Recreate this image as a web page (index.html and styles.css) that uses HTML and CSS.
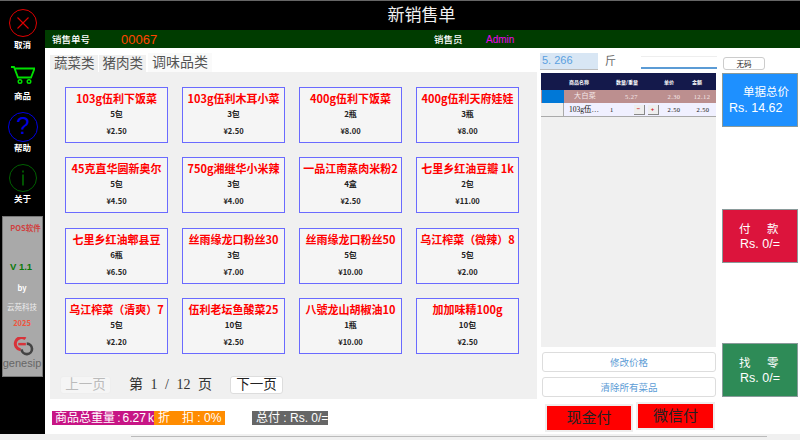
FILE: index.html
```html
<!DOCTYPE html>
<html lang="zh">
<head>
<meta charset="utf-8">
<title>新销售单</title>
<link rel="stylesheet" href="styles.css">
</head>
<body>
<div class="app">
  <aside class="side">
    <div class="nav nav-x">
      <svg viewBox="0 0 28 28" width="28" height="28"><circle cx="14" cy="14" r="13.500" fill="none" stroke="#e00000" stroke-width="1"/><path d="M8.500 8.500 19.500 19.500M19.500 8.500 8.500 19.500" stroke="#e00000" stroke-width="1.100"/></svg>
      <span>取消</span>
    </div>
    <div class="nav nav-cart">
      <svg viewBox="0 0 24 18" width="24" height="18"><path d="M0 1H3L7 11.500H20L23.500 2.500H4" fill="none" stroke="#00e000" stroke-width="1.800"/><circle cx="9" cy="15.500" r="1.800" fill="none" stroke="#00e000" stroke-width="1.400"/><circle cx="18" cy="15.500" r="1.800" fill="none" stroke="#00e000" stroke-width="1.400"/></svg>
      <span>商品</span>
    </div>
    <div class="nav nav-help">
      <svg viewBox="0 0 30 30" width="30" height="30"><circle cx="15" cy="15" r="14.500" fill="none" stroke="#0000e0" stroke-width="1"/><text x="15" y="22" text-anchor="middle" class="q">?</text></svg>
      <span>帮助</span>
    </div>
    <div class="nav nav-info">
      <svg viewBox="0 0 30 28" width="30" height="28"><circle cx="15" cy="14" r="13.500" fill="none" stroke="#006000" stroke-width="1"/><path d="M15 6.500v2M15 10.500v11" stroke="#008000" stroke-width="1.300"/></svg>
      <span>关于</span>
    </div>
    <div class="brand">
      <div class="b-pos">POS软件</div>
      <div class="b-ver">V 1.1</div>
      <div class="b-by">by</div>
      <div class="b-co">云苑科技</div>
      <div class="b-year">2025</div>
      <svg viewBox="0 0 22 20" width="22" height="19" class="b-logo"><path d="M13.500 2A6.500 6.500 0 1 0 8.500 13.500" fill="none" stroke="#d8333a" stroke-width="3.200"/><path d="M6 7.500h8" stroke="#d8333a" stroke-width="2.600"/><path d="M15 7a5.500 5.500 0 1 1-5.500 6" fill="none" stroke="#444" stroke-width="2.800"/></svg>
      <div class="b-name">genesip</div>
    </div>
  </aside>
  <div class="content">
    <header class="title">新销售单</header>
    <div class="info">
      <span class="i-l">销售单号</span><span class="i-no">00067</span>
      <span class="i-s">销售员</span><span class="i-a">Admin</span>
    </div>
    <div class="work">
      <main class="left">
        <div class="tabs"><span class="tab">蔬菜类</span><span class="tab">猪肉类</span><span class="tab on">调味品类</span></div>
        <div class="panel">
          <div class="grid">
            <div class="card"><b>103g伍利下饭菜</b><i>5包</i><em>¥2.50</em></div>
            <div class="card"><b>103g伍利木耳小菜</b><i>3包</i><em>¥2.50</em></div>
            <div class="card"><b>400g伍利下饭菜</b><i>2瓶</i><em>¥8.00</em></div>
            <div class="card"><b>400g伍利天府娃娃</b><i>3瓶</i><em>¥8.00</em></div>
            <div class="card"><b>45克直华圆新奥尔</b><i>5包</i><em>¥4.50</em></div>
            <div class="card"><b>750g湘继华小米辣</b><i>3包</i><em>¥4.00</em></div>
            <div class="card"><b>一品江南蒸肉米粉2</b><i>4盒</i><em>¥2.50</em></div>
            <div class="card"><b>七里乡红油豆瓣 1k</b><i>2包</i><em>¥11.00</em></div>
            <div class="card"><b>七里乡红油郫县豆</b><i>6瓶</i><em>¥6.50</em></div>
            <div class="card"><b>丝雨缘龙口粉丝30</b><i>3包</i><em>¥7.00</em></div>
            <div class="card"><b>丝雨缘龙口粉丝50</b><i>5包</i><em>¥10.00</em></div>
            <div class="card"><b>乌江榨菜（微辣）8</b><i>5包</i><em>¥2.00</em></div>
            <div class="card"><b>乌江榨菜（清爽）7</b><i>5包</i><em>¥2.20</em></div>
            <div class="card"><b>伍利老坛鱼酸菜25</b><i>10包</i><em>¥2.50</em></div>
            <div class="card"><b>八號龙山胡椒油10</b><i>1瓶</i><em>¥10.00</em></div>
            <div class="card"><b>加加味精100g</b><i>10包</i><em>¥2.50</em></div>
          </div>
          <div class="pager">
            <span class="pbtn off">上一页</span>
            <span class="pinfo">第 1 / 12 页</span>
            <span class="pbtn">下一页</span>
          </div>
        </div>
        <div class="foot">
          <span class="f1">商品总重量 : 6.27 k</span><span class="f2">折　扣 : 0%</span><span class="f3">总付 : Rs. 0/=</span>
        </div>
      </main>
      <section class="mid">
        <div class="scale"><span class="sv">5. 266</span><span class="su">斤</span><span class="sin"></span></div>
        <div class="table">
          <div class="thead">
            <span class="c1"></span><span class="c2">商品名称</span><span class="c3">数量/重量</span><span class="c4">单价</span><span class="c5">金额</span>
          </div>
          <div class="row r-a"><span class="c1 sel"></span><span class="c2">大白菜</span><span class="c3">5.27</span><span class="c4">2.30</span><span class="c5">12.12</span></div>
          <div class="row r-b"><span class="c1"></span><span class="c2">103g伍…</span><span class="c3 qty"><span>1</span><u class="minus">−</u><u>+</u></span><span class="c4">2.50</span><span class="c5">2.50</span></div>
        </div>
        <div class="acts"><div class="act">修改价格</div><div class="act">清除所有菜品</div></div>
        <div class="pays"><span class="pay">现金付</span><span class="pay">微信付</span></div>
      </section>
      <aside class="right">
        <div class="nocode">无码</div>
        <div class="box blue"><span class="bt">单据总价</span><span class="bv">Rs. 14.62</span></div>
        <div class="box red"><span class="bt">付　款</span><span class="bv">Rs. 0/=</span></div>
        <div class="box green"><span class="bt">找　零</span><span class="bv">Rs. 0/=</span></div>
      </aside>
    </div>
  </div>
</div>
<div class="hbar"></div>
</body>
</html>
```
FILE: styles.css
```css
* { box-sizing: border-box; }
html, body { margin: 0; padding: 0; }
body { width: 800px; height: 440px; overflow: hidden; background: #f0f0f0; font-family: "Liberation Sans", "Noto Sans CJK SC", sans-serif; }
.app { display: flex; height: 434px; background: #fff; border-top: 1px solid #666; }
.hbar { height: 1px; width: 636px; margin: 2px 0 0 131px; background: #bbb; }
.side { width: 45px; flex: none; background: #000; display: flex; flex-direction: column; align-items: center; padding-top: 8px; color: #fff; }
.nav { display: flex; flex-direction: column; align-items: center; flex: none; font: 700 8.500px/11px "Noto Sans CJK SC", sans-serif; }
.nav span { display: block; }
.nav-x { height: 57px; gap: 2px; }
.nav-cart { height: 46px; gap: 6px; }
.nav-help { height: 52px; gap: 0; }
.nav-info { height: 52px; gap: 1px; }
.q { font: 24px "Liberation Sans", sans-serif; fill: #0000e0; }
.brand { width: 41px; height: 161px; margin-right: 1px; background: #a9a9a9; border: 1px solid #777; display: flex; flex-direction: column; align-items: center; flex: none; font-family: "Noto Sans CJK SC", sans-serif; font-weight: 700; }
.b-pos { font-size: 7.500px; line-height: 10px; color: #d04040; margin: 6px 0 0 7px; white-space: nowrap; }
.b-ver { font: 700 9.500px/12px "Liberation Sans", sans-serif; color: #0a7a0a; margin: 28px 2px 0 0; }
.b-by { font-size: 7.500px; line-height: 10px; color: #fff; margin-top: 10px; }
.b-co { font-size: 7.500px; line-height: 10px; color: #eee; margin-top: 9px; font-weight: 400; white-space: nowrap; }
.b-year { font-size: 7.500px; line-height: 10px; color: #ee5540; margin-top: 6px; }
.b-logo { margin-top: 9px; margin-left: 2px; flex: none; }
.b-name { font: 400 11px/12px "Liberation Sans", sans-serif; color: #666; margin-top: 1px; }
.content { flex: 1; display: flex; flex-direction: column; min-width: 0; }
.title { height: 29px; flex: none; background: #000; color: #f0f0f0; text-align: center; font: 400 17px/30px "Liberation Serif", "Noto Sans CJK SC", serif; padding-right: 2px; }
.info { height: 18px; flex: none; background: #003c00; display: flex; align-items: center; color: #fff; font: 500 9.500px/18px "Noto Sans CJK SC", sans-serif; padding-left: 7px; }
.i-l { width: 69px; }
.i-no { font: 400 13px "Liberation Sans", sans-serif; color: #ff4500; width: 313px; }
.i-s { width: 52px; }
.i-a { color: #f000f0; font: 400 10px "Liberation Sans", sans-serif; }
.work { flex: 1; display: flex; min-height: 0; }
.left { width: 492px; flex: none; display: flex; flex-direction: column; }
.tabs { display: flex; padding-left: 5px; height: 24px; flex: none; align-items: flex-end; }
.tab { height: 17px; padding: 0 3px 0 4px; background: #f0f0f0; font: 400 13.500px/17px "Liberation Serif", "Noto Sans CJK SC", serif; color: #555; border-right: 1px solid #fff; }
.tab.on { height: 19px; padding: 0 4px; background: #fafafa; line-height: 19px; border: 0; margin-left: 1px; font-size: 14px; }
.panel { margin-left: 5px; background: #f0f0f0; height: 327px; flex: none; padding: 15px 0 0 15px; }
.grid { display: grid; grid-template-columns: repeat(4, 103px); grid-auto-rows: 56px; column-gap: 14px; row-gap: 14.330px; }
.card { border: 1px solid #6a6aff; background: #f5f5f5; display: flex; flex-direction: column; align-items: center; padding-top: 3px; overflow: hidden; }
.card b { font: 700 11px/15px "Noto Sans CJK SC", sans-serif; color: #f00; white-space: nowrap; }
.card i { font: 700 8px/10px "Noto Sans CJK SC", sans-serif; font-style: normal; color: #222; margin-top: 3px; }
.card em { font: 700 7.500px/10px "Noto Sans CJK SC", sans-serif; font-style: normal; color: #222; margin-top: 7px; }
.pager { display: flex; align-items: center; margin: 22px 0 0 -5px; }
.pbtn { width: 53px; height: 18px; background: #fff; border: 1px solid #ddd; border-radius: 3px; text-align: center; font: 400 13.500px/15px "Liberation Serif", "Noto Sans CJK SC", serif; color: #222; }
.pbtn.off { width: 51px; background: #f5f5f5; color: #bbb; border-color: #eee; }
.pinfo { width: 101px; margin-left: 18px; font: 400 14px/18px "Liberation Serif", "Noto Sans CJK SC", serif; color: #333; white-space: pre; word-spacing: 4px; }
.foot { display: flex; align-items: center; margin-top: 12px; padding-left: 7px; font: 400 12px/14px "Liberation Sans", "Noto Sans CJK SC", sans-serif; color: #fff; }
.foot span { height: 14px; white-space: nowrap; display: block; }
.f1 { width: 102px; background: #c71585; padding-left: 3px; word-spacing: -1.200px; }
.f2 { width: 71px; background: #ff8c00; padding-left: 4px; }
.f3 { width: 76px; background: #666; padding-left: 4px; margin-left: 27px; }
.mid { width: 185px; flex: none; padding-left: 4px; display: flex; flex-direction: column; }
.scale { display: flex; align-items: flex-start; height: 22px; flex: none; padding-top: 5px; }
.sv { width: 58px; height: 17px; margin-left: -1px; padding-left: 2px; background: #d8e6f4; color: #5a9fe0; font: 400 11px/15px "Liberation Sans", sans-serif; border-bottom: 1px solid #bbb; }
.su { width: 43px; padding-left: 7px; font: 400 11px/16px "Liberation Serif", "Noto Sans CJK SC", serif; color: #666; }
.sin { width: 76px; height: 13px; margin-top: 3px; border-bottom: 2px solid #5b9bd5; border-top: 1px solid #eee; }
.table { margin-top: 3px; width: 175px; height: 274px; flex: none; background: #f0f0f0; font: 400 6.500px/13px "Liberation Serif", "Noto Sans CJK SC", serif; letter-spacing: .4px; }
.thead, .row { display: flex; align-items: center; }
.thead { height: 17px; background: #14194b; color: #fff; font: 700 5px/13px "Noto Sans CJK SC", sans-serif; letter-spacing: 0; }
.row { height: 13px; }
.r-a { background: #bc8f8f; color: #f4e8e8; }
.r-b { background: #f0f0ff; color: #111; border-bottom: 1px solid #aaa; height: 14px; }
.c1 { width: 23px; align-self: stretch; background: #f0f0f0; border-right: 1px solid #aaa; }
.c1.sel { background: #0078d7; border: 0; margin-left: 1px; width: 22px; }
.thead .c1 { background: none; border: 0; }
.c2 { width: 46px; padding-left: 5px; white-space: nowrap; }
.r-a .c2 { padding-left: 10px; font-size: 7px; }
.r-b .c2 { font-size: 7.500px; letter-spacing: 0; }
.c3 { width: 50px; padding-left: 6px; }
.r-a .c3 { padding-left: 15px; }
.c4 { width: 28px; text-align: center; }
.thead .c4 { padding-right: 10px; }
.c5 { width: 28px; text-align: center; }
.thead .c5 { padding-right: 10px; }
.r-b .c5 { padding-left: 2px; }
.qty { display: flex; align-items: center; padding-left: 0; }
.qty u { width: 11px; height: 10px; margin-left: 3px; background: #eee; border-right: 1px solid #888; border-bottom: 1px solid #888; color: #d02020; text-decoration: none; text-align: center; font: 700 6px/9px "Liberation Sans", sans-serif; }
.qty .minus { margin-left: 20px; }
.acts { display: flex; flex-direction: column; gap: 5px; margin-top: 5px; flex: none; }
.act { width: 174px; height: 20px; margin-left: 1px; border: 1px solid #ddd; border-radius: 3px; background: #fff; text-align: center; color: #5b9bd5; font: 400 9.500px/18px "Noto Sans CJK SC", sans-serif; }
.pays { display: flex; margin-top: 5px; padding-left: 4px; align-items: flex-start; }
.pay { width: 88px; height: 28px; margin-top: 2px; border: 2px solid #eee; background: #f00; color: #222; text-align: center; font: 400 15px/24px "Liberation Serif", "Noto Sans CJK SC", serif; }
.pay + .pay { margin-left: 3px; width: 79px; margin-top: 0; }
.right { width: 78px; flex: none; display: flex; flex-direction: column; }
.nocode { width: 42px; height: 13px; margin: 9px 0 0 1px; border: 1px solid #ccc; border-radius: 3px; text-align: center; font: 400 7.500px/11px "Noto Sans CJK SC", sans-serif; color: #222; }
.box { width: 76px; height: 54px; flex: none; color: #fff; display: flex; flex-direction: column; justify-content: center; border: 1px solid #8a9a9a; }
.bt { font: 400 11.500px/15px "Liberation Serif", "Noto Sans CJK SC", serif; text-align: center; letter-spacing: 2.500px; }
.bv { font: 400 12.500px/14px "Liberation Sans", sans-serif; text-align: center; }
.blue { background: #1e90ff; margin-top: 3px; }
.blue .bt { padding-left: 12px; letter-spacing: 0; }
.blue .bv { text-align: left; padding-left: 6px; line-height: 16px; }
.red { background: #dc143c; margin-top: 82px; }
.green { background: #2e8b57; margin-top: 80px; }
```
